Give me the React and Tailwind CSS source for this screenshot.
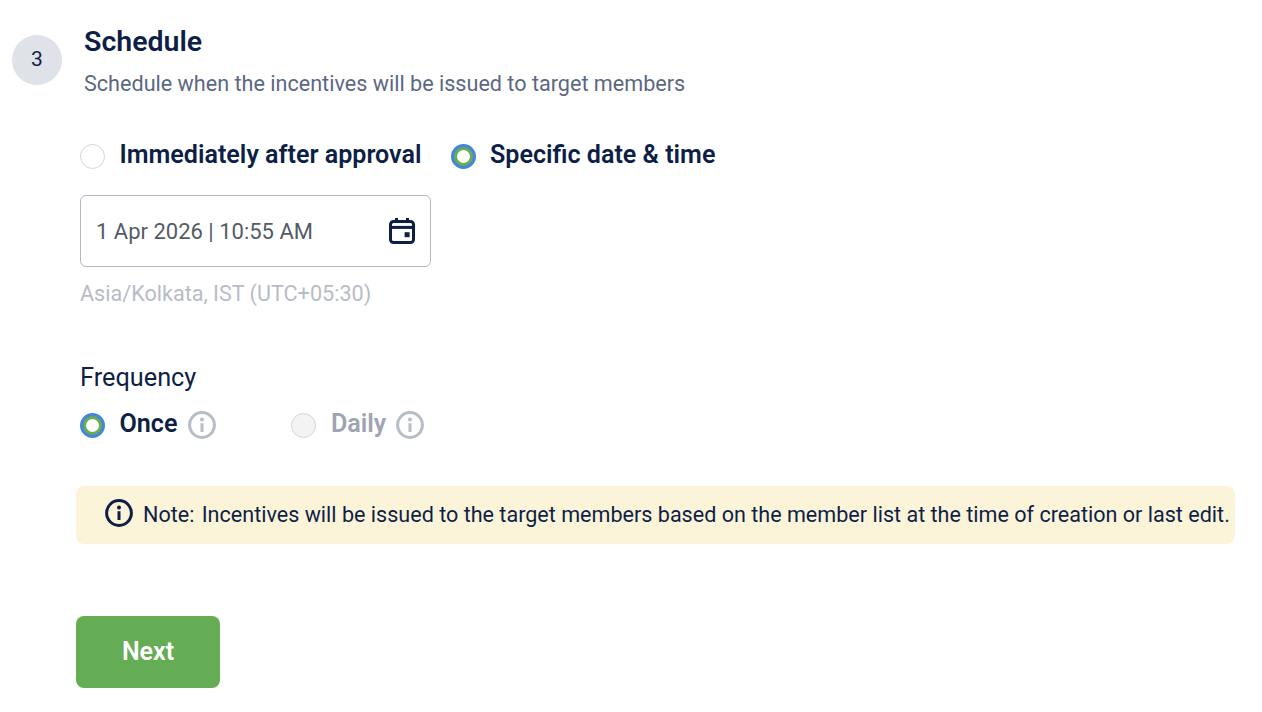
import React from 'react';

const Info = ({ className }) => (
  <svg viewBox="0 0 28 28" fill="none" className={className}>
    <circle cx="14" cy="14" r="12.4" stroke="currentColor" strokeWidth="3" />
    <circle cx="14" cy="8.6" r="2" fill="currentColor" />
    <rect x="12.5" y="12.2" width="3" height="8.8" fill="currentColor" />
  </svg>
);

const CalendarIcon = () => (
  <svg viewBox="0 0 28 28" fill="none" className="w-7 h-7 text-[#0e1f47]">
    <rect x="2.5" y="4.5" width="23" height="21" rx="3" stroke="currentColor" strokeWidth="3" />
    <path d="M3 10.4h22" stroke="currentColor" strokeWidth="3" />
    <path d="M8.5 1v4M19.5 1v4" stroke="currentColor" strokeWidth="3" />
    <rect x="16.6" y="15.2" width="5" height="5" fill="currentColor" />
  </svg>
);

const Radio = ({ checked, disabled, className = '' }) => {
  if (checked) {
    return (
      <span className={`w-[25px] h-[25px] mt-[2px] rounded-full bg-[#66ad55] border-[3px] border-[#4485dd] flex items-center justify-center shrink-0 ${className}`}>
        <span className="w-[13px] h-[13px] rounded-full bg-white" />
      </span>
    );
  }
  return (
    <span className={`block w-[25px] h-[25px] mt-[2px] rounded-full border border-[#d6d6d9] shrink-0 ${disabled ? 'bg-[#f3f3f4]' : 'bg-white'} ${className}`} />
  );
};

export default function App() {
  return (
    <div className="w-[1262px] h-[712px] bg-white overflow-hidden font-['Roboto',sans-serif] text-[#0e1f47]">
      {/* Header */}
      <div className="flex pl-3 pt-[19px]">
        <div className="w-[50px] h-[50px] mt-4 rounded-full bg-[#e0e2e9] flex items-center justify-center text-[21px]">3</div>
        <div className="ml-[22px]">
          <h2 className="text-[28.5px] leading-[46px] font-semibold">Schedule</h2>
          <p className="text-[21.6px] leading-[38px] text-[#5c6883]">Schedule when the incentives will be issued to target members</p>
        </div>
      </div>

      <div className="pl-[80px] pt-[36px]">
        {/* Issue time */}
        <div className="flex items-center h-8">
          <Radio />
          <span className="ml-[14.5px] text-[25.1px] font-semibold">Immediately after approval</span>
          <Radio checked className="ml-[29.5px]" />
          <span className="ml-[14px] text-[25.1px] font-semibold">Specific date &amp; time</span>
        </div>

        <div className="mt-[24px] w-[351px] h-[72px] rounded-md border border-[#b5b8c2] flex items-center justify-between pl-[15px] pr-[14px]">
          <span className="mt-[1px] text-[22px] text-[#555b66]">1 Apr 2026 | 10:55 AM</span>
          <CalendarIcon />
        </div>
        <p className="mt-[13px] text-[21.6px] leading-7 text-[#b8bcc7]">Asia/Kolkata, IST (UTC+05:30)</p>

        {/* Frequency */}
        <p className="mt-[54px] text-[25.3px] leading-8">Frequency</p>
        <div className="flex items-center h-8 mt-[14px]">
          <Radio checked />
          <span className="ml-[14.5px] text-[25.1px] font-semibold">Once</span>
          <Info className="ml-[11px] w-7 h-7 mt-[1px] text-[#b8bcc9]" />
          <Radio disabled className="ml-[75px]" />
          <span className="ml-[14.5px] text-[25.1px] font-semibold text-[#9ea4b4]">Daily</span>
          <Info className="ml-[10px] w-7 h-7 mt-[1px] text-[#b8bcc9]" />
        </div>
      </div>

      {/* Note */}
      <div className="ml-[76px] mt-[46px] w-[1159px] h-[58px] rounded-lg bg-[#fcf4d9] flex items-center pl-[29px]">
        <Info className="w-[28px] h-[28px] -mt-1 text-[#0e1f47] shrink-0" />
        <span className="ml-[10px] text-[21.57px] whitespace-nowrap">
          Note:<span className="ml-[2px]"> Incentives will be issued to the target members based on the member list at the time of creation or last edit.</span>
        </span>
      </div>

      <button className="block ml-[76px] mt-[72px] w-[144px] h-[72px] rounded-lg bg-[#65ad55] text-white text-[25px] font-semibold">Next</button>
    </div>
  );
}
